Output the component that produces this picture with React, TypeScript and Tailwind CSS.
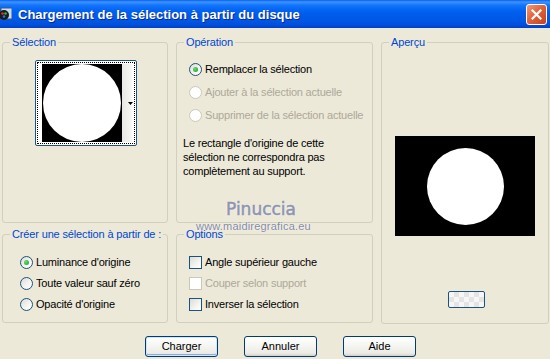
import React from "react";

const FONT = { fontFamily: '"Liberation Sans", Arial, sans-serif' };

function Radio({ checked = false, disabled = false }: { checked?: boolean; disabled?: boolean }) {
  return (
    <div
      className={
        "w-[13px] h-[13px] rounded-full border flex items-center justify-center shrink-0 " +
        (disabled
          ? "border-[#CAC8BB] bg-white"
          : "border-[#1C5180] bg-[linear-gradient(135deg,#DCDBD5_0%,#F6F6F3_60%,#FFFFFF_100%)]")
      }
    >
      {checked && (
        <div className="w-[5px] h-[5px] rounded-full bg-[radial-gradient(circle_at_35%_35%,#6DDB6D,#1C9A1C)]" />
      )}
    </div>
  );
}

function Check({ disabled = false }: { disabled?: boolean }) {
  return (
    <div
      className={
        "w-[13px] h-[13px] border shrink-0 " +
        (disabled
          ? "border-[#CAC8BB] bg-white"
          : "border-[#1C5180] bg-[linear-gradient(135deg,#DCDBD5_0%,#F4F4F0_60%,#FFFFFF_100%)]")
      }
    />
  );
}

function Group({
  label,
  className,
  children,
}: {
  label: string;
  className: string;
  children?: React.ReactNode;
}) {
  return (
    <div className={"relative border border-[#D0D0BF] rounded-[3px] " + className}>
      <div className="absolute -top-[7px] left-[7px] px-[2px] bg-[#ECE9D8] text-[#0046D5] text-[11px] leading-[13px] whitespace-nowrap tracking-[-0.15px]">
        {label}
      </div>
      {children}
    </div>
  );
}

function Btn({ label, def = false }: { label: string; def?: boolean }) {
  return (
    <div
      className={
        "w-[73px] h-[21px] rounded-[3px] border border-[#003C74] flex items-center justify-center text-[11px] text-black bg-[linear-gradient(to_bottom,#FFFFFF_0%,#F4F4F0_50%,#ECEBE6_85%,#D6D0C5_100%)] " +
        (def ? "shadow-[inset_0_0_0_1px_#CEE7FF,inset_0_-1px_0_1px_#89ADE4]" : "")
      }
    >
      {label}
    </div>
  );
}

export default function App() {
  return (
    <div
      className="relative w-[550px] h-[359px] bg-[#ECE9D8] flex flex-col overflow-hidden"
      style={FONT}
    >
      {/* Title bar */}
      <div className="h-[28px] shrink-0 flex items-center bg-[linear-gradient(to_bottom,#0A5FEF_0%,#3D95FF_7%,#1476FC_18%,#0060F0_40%,#0058E6_70%,#0050DC_88%,#0040CC_100%)]">
        <svg width="14" height="14" viewBox="0 0 14 14" className="ml-[-2px] shrink-0">
          <rect x="3" y="1" width="11" height="11" fill="#C8DCF0" stroke="#3B5A82" strokeWidth="1" />
          <circle cx="6" cy="8" r="5" fill="#1A1A1A" />
          <circle cx="4.5" cy="6.5" r="1.3" fill="#E03030" />
          <circle cx="7.5" cy="6.5" r="1.3" fill="#30C030" />
          <circle cx="6" cy="9.5" r="1.3" fill="#3070E0" />
        </svg>
        <div className="ml-[6px] text-white font-bold text-[13px] leading-none [text-shadow:1px_1px_0_#0A2A8A] whitespace-nowrap">
          Chargement de la sélection à partir du disque
        </div>
        <div className="ml-auto mr-[3px] w-[21px] h-[21px] rounded-[3px] border border-white bg-[linear-gradient(135deg,#F09A7A_0%,#E0643C_45%,#C8421A_100%)] flex items-center justify-center">
          <svg width="11" height="11" viewBox="0 0 11 11">
            <path d="M1.5 1.5 L9.5 9.5 M9.5 1.5 L1.5 9.5" stroke="white" strokeWidth="2.2" strokeLinecap="square" />
          </svg>
        </div>
      </div>

      {/* Body */}
      <div className="flex pl-[2px] pt-[14px] text-[11px] tracking-[-0.2px]">
        {/* Column 1 */}
        <div className="w-[166px] flex flex-col gap-[11px]">
          <Group label="Sélection" className="h-[181px]">
            <div className="ml-[32px] mt-[17px] w-[102px] h-[86px] rounded-[2px] border border-[#1C5180] bg-white p-[1px]">
              <div className="w-full h-full border border-dotted border-black flex bg-white">
                <div className="ml-[4px] mt-[1px] w-[80px] h-[78px] bg-black flex items-center justify-center">
                  <div className="w-[78px] h-[78px] rounded-full bg-white" />
                </div>
                <div className="w-[10px] h-[78px] mt-[1px] bg-[linear-gradient(to_right,#E8E8E4,#F7F7F5)] flex items-center justify-end">
                  <svg width="5" height="3" viewBox="0 0 5 3" className="mr-[-1px]">
                    <path d="M0 0 H5 L2.5 3 Z" fill="black" />
                  </svg>
                </div>
              </div>
            </div>
          </Group>
          <Group label="Créer une sélection à partir de :" className="h-[89px]">
            <div className="flex flex-col gap-[8px] pt-[21px] pl-[17px] leading-[13px] text-black">
              <div className="flex items-center gap-[3px]">
                <Radio checked />
                <span>Luminance d'origine</span>
              </div>
              <div className="flex items-center gap-[3px]">
                <Radio />
                <span>Toute valeur sauf zéro</span>
              </div>
              <div className="flex items-center gap-[3px]">
                <Radio />
                <span>Opacité d'origine</span>
              </div>
            </div>
          </Group>
        </div>

        {/* Column 2 */}
        <div className="ml-[8px] w-[197px] flex flex-col gap-[11px]">
          <Group label="Opération" className="h-[181px]">
            <div className="flex flex-col gap-[10px] pt-[20px] pl-[12px] leading-[13px]">
              <div className="flex items-center gap-[3px] text-black">
                <Radio checked />
                <span>Remplacer la sélection</span>
              </div>
              <div className="flex items-center gap-[3px] text-[#ACA899]">
                <Radio disabled />
                <span>Ajouter à la sélection actuelle</span>
              </div>
              <div className="flex items-center gap-[3px] text-[#ACA899]">
                <Radio disabled />
                <span>Supprimer de la sélection actuelle</span>
              </div>
            </div>
            <div className="mt-[14px] pl-[6px] leading-[14px] text-black">
              Le rectangle d'origine de cette
              <br />
              sélection ne correspondra pas
              <br />
              complètement au support.
            </div>
          </Group>
          <Group label="Options" className="h-[89px]">
            <div className="flex flex-col gap-[8px] pt-[21px] pl-[12px] leading-[13px]">
              <div className="flex items-center gap-[3px] text-black">
                <Check />
                <span>Angle supérieur gauche</span>
              </div>
              <div className="flex items-center gap-[3px] text-[#ACA899]">
                <Check disabled />
                <span>Couper selon support</span>
              </div>
              <div className="flex items-center gap-[3px] text-black">
                <Check />
                <span>Inverser la sélection</span>
              </div>
            </div>
          </Group>
        </div>

        {/* Column 3 */}
        <div className="ml-[8px] w-[168px]">
          <Group label="Aperçu" className="h-[282px] flex flex-col">
            <div className="ml-[13px] mt-[93px] w-[140px] h-[100px] bg-black flex items-center justify-center">
              <div className="w-[77px] h-[77px] rounded-full bg-white" />
            </div>
            <div className="ml-[66px] mt-[55px] w-[37px] h-[17px] rounded-[2px] border border-[#1C5180] bg-[conic-gradient(#E4E4E4_25%,#F6F6F6_0_50%,#E4E4E4_0_75%,#F6F6F6_0)] bg-[length:10px_10px]" />
          </Group>
        </div>
      </div>

      {/* Buttons */}
      <div className="flex pl-[145px] mt-[12px] gap-[26px]">
        <Btn label="Charger" def />
        <Btn label="Annuler" />
        <Btn label="Aide" />
      </div>

      {/* Watermark */}
      <div
        className="absolute left-[226px] top-[199px] text-[17px] leading-[20px] text-[#8E94B0] [-webkit-text-stroke:0.5px_#8E94B0] [text-shadow:0_0_2px_#FFFFFF]"
        style={{ fontFamily: '"DejaVu Sans", sans-serif' }}
      >
        Pinuccia
      </div>
      <div
        className="absolute left-[196px] top-[220px] text-[11px] leading-[13px] text-[#858BA6] tracking-[0.2px] [text-shadow:0_0_2px_#FFFFFF]"
        style={{ fontFamily: '"Liberation Sans", Arial, sans-serif' }}
      >
        www.maidiregrafica.eu
      </div>
    </div>
  );
}
